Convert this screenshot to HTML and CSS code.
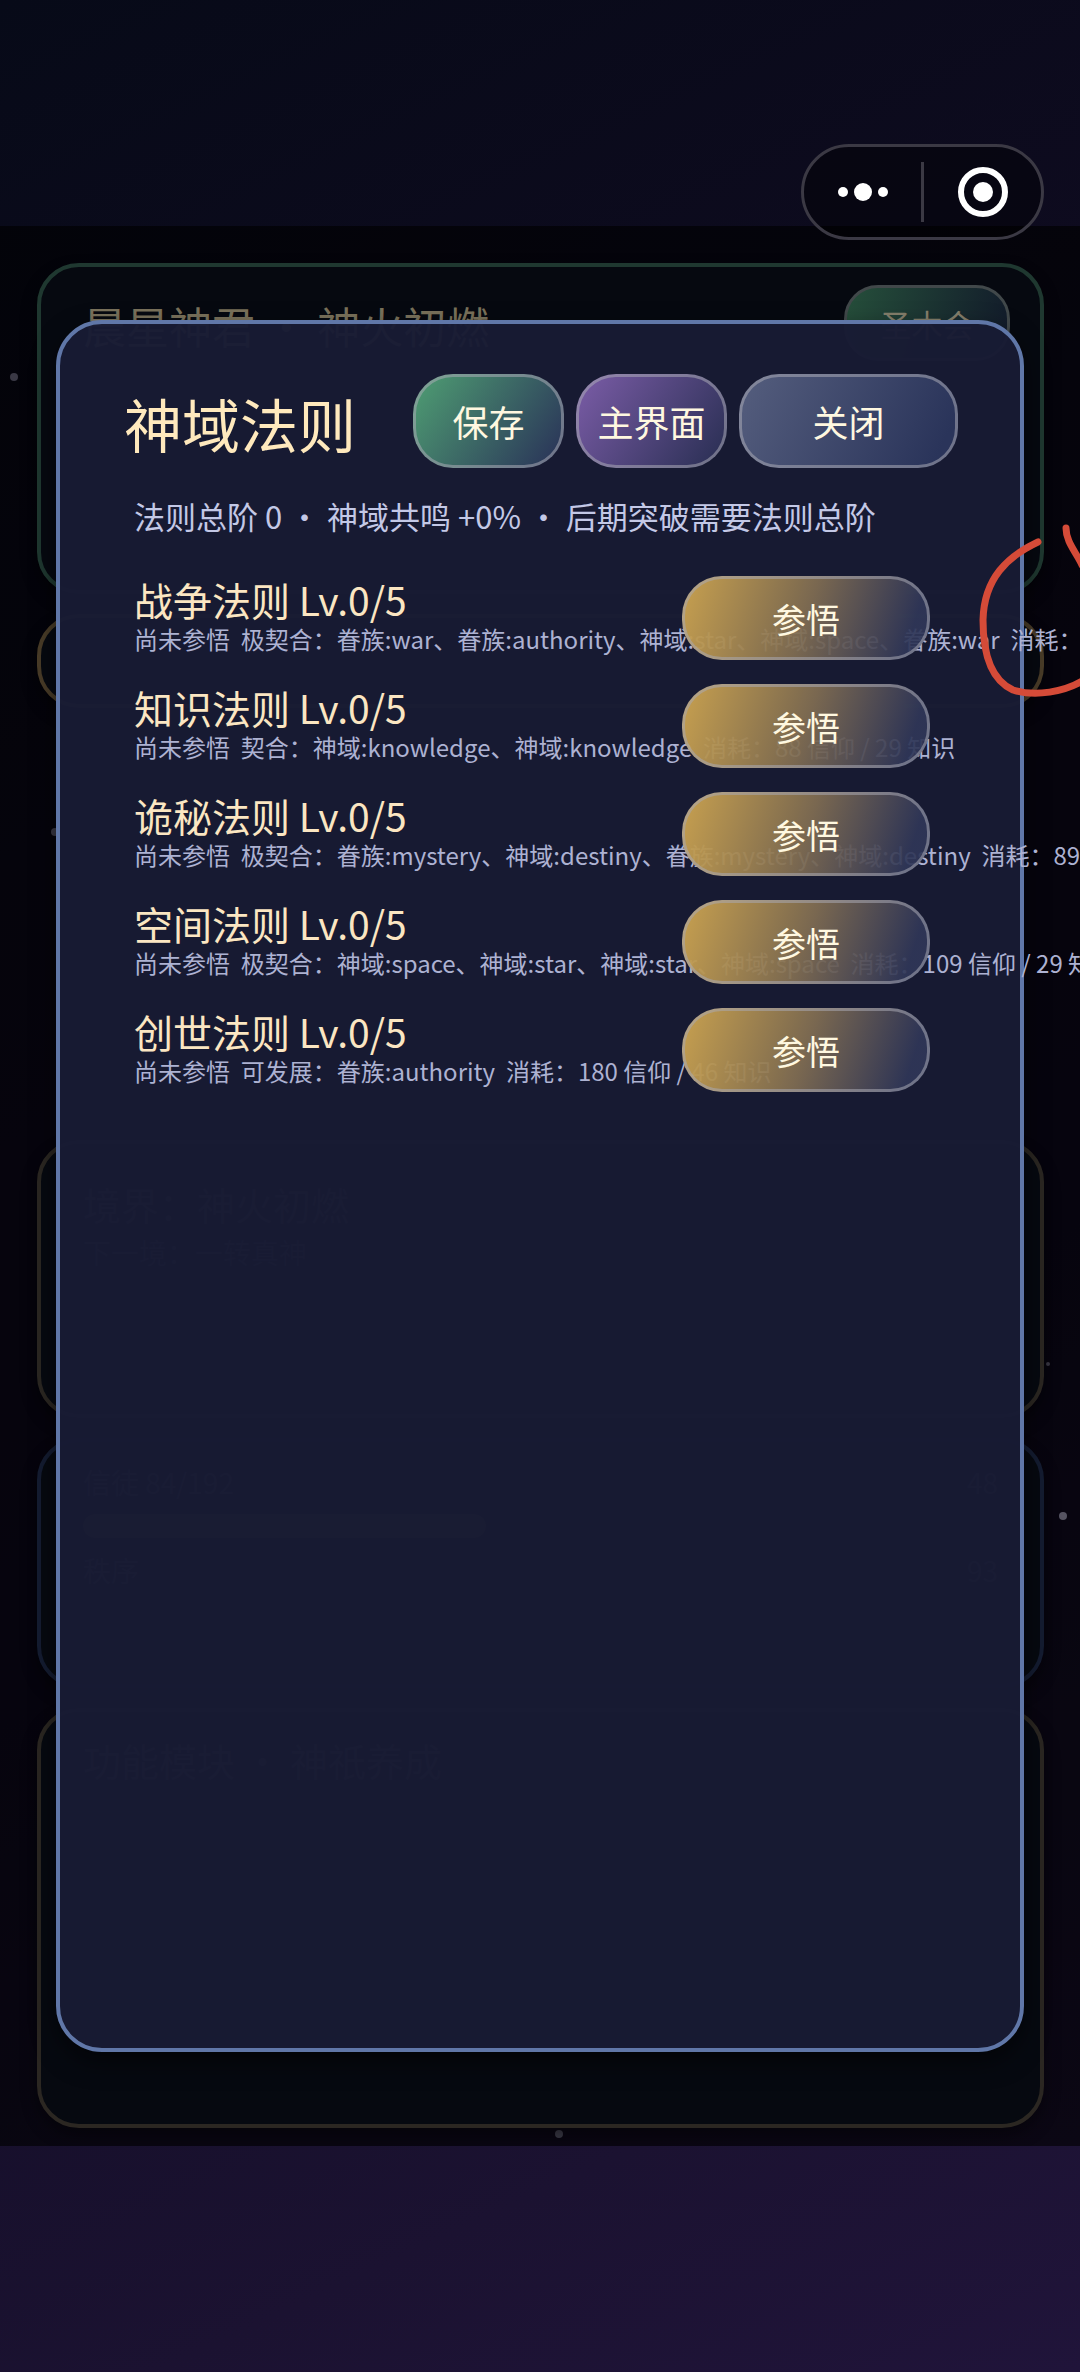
FILE: index.html
```html
<!DOCTYPE html>
<html lang="zh-CN">
<head>
<meta charset="utf-8">
<meta name="viewport" content="width=device-width, initial-scale=1">
<title>神域法则</title>
<link rel="stylesheet" href="styles.css">
</head>
<body>
<nav class="capsule" aria-label="小程序菜单">
  <button class="capsule-btn" type="button" aria-label="更多">
    <svg width="52" height="20" viewBox="0 0 52 20"><circle cx="6" cy="10" r="5"/><circle cx="26" cy="10" r="9"/><circle cx="46" cy="10" r="5"/></svg>
  </button>
  <span class="capsule-line"></span>
  <button class="capsule-btn" type="button" aria-label="退出">
    <svg width="52" height="52" viewBox="0 0 52 52"><circle cx="26" cy="26" r="22" fill="none" stroke="#fff" stroke-width="6"/><circle cx="26" cy="26" r="10"/></svg>
  </button>
</nav>

<main class="scene">
  <svg class="stars" viewBox="0 0 1080 1920" aria-hidden="true">
    <g fill="#3a3945"><circle cx="14" cy="151" r="4"/><circle cx="55" cy="606" r="4"/><circle cx="559" cy="1908" r="4"/><circle cx="1048" cy="1138" r="2"/></g>
    <circle cx="1063" cy="1290" r="4" fill="#565462"/>
  </svg>

  <section class="card card-god">
    <h2 class="god-name">晨星神君 · 神火初燃</h2>
    <button class="camp" type="button">圣木会</button>
  </section>
  <section class="card card-notice"></section>
  <section class="world"></section>
  <section class="card card-realm">
    <h2 class="realm-name">境界：神火初燃</h2>
    <p class="ghost">下一境：一转真神</p>
  </section>
  <section class="card card-stats">
    <p class="stat"><span>信徒 84/192</span><span>48</span></p>
    <div class="bar"></div>
    <p class="stat"><span>秩序</span><span>93</span></p>
  </section>
  <section class="card card-modules">
    <h2 class="realm-name">功能模块 · 神祇养成</h2>
  </section>

  <div class="dialog" role="dialog" aria-labelledby="dialog-title">
    <header class="dialog-head">
      <h1 class="dialog-title" id="dialog-title">神域法则</h1>
      <button class="btn btn-save" type="button">保存</button>
      <button class="btn btn-home" type="button">主界面</button>
      <button class="btn btn-close" type="button">关闭</button>
    </header>
    <div class="dialog-body">
      <p class="summary">法则总阶 0 · 神域共鸣 +0% · 后期突破需要法则总阶</p>
      <ul class="laws">
        <li class="law">
          <div class="law-text"><h3 class="law-name">战争法则 Lv.0/5</h3><p class="law-info">尚未参悟  极契合：眷族:war、眷族:authority、神域:star、神域:space、眷族:war  消耗：</p></div>
          <button class="btn btn-learn" type="button">参悟</button>
        </li>
        <li class="law">
          <div class="law-text"><h3 class="law-name">知识法则 Lv.0/5</h3><p class="law-info">尚未参悟  契合：神域:knowledge、神域:knowledge  消耗：88 信仰 / 29 知识</p></div>
          <button class="btn btn-learn" type="button">参悟</button>
        </li>
        <li class="law">
          <div class="law-text"><h3 class="law-name">诡秘法则 Lv.0/5</h3><p class="law-info">尚未参悟  极契合：眷族:mystery、神域:destiny、眷族:mystery、神域:destiny  消耗：89</p></div>
          <button class="btn btn-learn" type="button">参悟</button>
        </li>
        <li class="law">
          <div class="law-text"><h3 class="law-name">空间法则 Lv.0/5</h3><p class="law-info">尚未参悟  极契合：神域:space、神域:star、神域:star、神域:space  消耗：109 信仰 / 29 知识</p></div>
          <button class="btn btn-learn" type="button">参悟</button>
        </li>
        <li class="law">
          <div class="law-text"><h3 class="law-name">创世法则 Lv.0/5</h3><p class="law-info">尚未参悟  可发展：眷族:authority  消耗：180 信仰 / 46 知识</p></div>
          <button class="btn btn-learn" type="button">参悟</button>
        </li>
      </ul>
    </div>
  </div>

  <svg class="mark" width="110" height="190" viewBox="970 514 110 190" aria-hidden="true">
    <path d="M1038 542C1008 556 984 578 983 620C983 655 991 680 1013 690C1035 697 1065 692 1084 680M1066 528C1066 542 1076 552 1082 565"/>
  </svg>
</main>
</body>
</html>
```
FILE: styles.css
```css
* { box-sizing: border-box; }

body {
  margin: 0;
  min-height: 100vh;
  display: flex;
  flex-direction: column;
  justify-content: center;
  overflow-x: hidden;
  background: linear-gradient(155deg, #070a18 0%, #0f0b20 30%, #120d26 60%, #1b1231 85%, #20143a 100%);
  color: #fff;
  font-family: "Noto Sans CJK SC", sans-serif;
}

h1, h2, h3, p, ul { margin: 0; padding: 0; font-weight: 400; }
ul { list-style: none; }
button { margin: 0; padding: 0; font: inherit; color: inherit; }

.capsule {
  position: absolute;
  top: 144px;
  right: 36px;
  z-index: 3;
  display: flex;
  align-items: center;
  width: 243px;
  height: 96px;
  border: 3px solid #3b3944;
  border-radius: 48px;
  background: rgba(0, 0, 0, .4);
}
.capsule-btn {
  flex: 1;
  display: flex;
  align-items: center;
  justify-content: center;
  height: 100%;
  border: 0;
  background: none;
}
.capsule-btn svg { fill: #fff; }
.capsule-line { width: 3px; height: 60px; background: #3b3944; }

.scene {
  position: relative;
  display: flex;
  flex-direction: column;
  gap: 20px;
  min-height: 1920px;
  padding: 37px 36px 18px 37px;
  background: rgba(0, 0, 0, .62);
  overflow: hidden;
}
.stars { position: absolute; inset: 0; width: 100%; height: 100%; }

.card {
  position: relative;
  padding: 32px 42px;
  border: 4px solid #2b2722;
  border-radius: 42px;
  background: #060910;
  box-shadow: 0 8px 16px rgba(0, 0, 0, .4);
}
.card-god {
  display: flex;
  align-items: flex-start;
  justify-content: space-between;
  min-height: 331px;
  padding: 18px 30px 18px 42px;
  border-color: #1f3830;
}
.god-name { padding-top: 10px; font-size: 43px; line-height: 60px; color: #7a725b; }
.camp {
  width: 166px;
  height: 76px;
  border: 3px solid #41484a;
  border-radius: 34px;
  background: linear-gradient(105deg, #26503b, #121b2a 95%) border-box;
  color: #857f6c;
  font-size: 31px;
}
.card-notice { min-height: 94px; border-color: #493c28; }
.world { flex: 1; }
.card-realm { min-height: 278px; }
.realm-name { font-size: 38px; line-height: 56px; color: #4a4540; }
.ghost { font-size: 28px; line-height: 40px; color: #3c3d48; }
.card-stats { min-height: 250px; border-color: #141c31; padding-top: 20px; }
.stat { display: flex; justify-content: space-between; font-size: 28px; line-height: 40px; color: #484850; }
.bar { width: 44%; height: 24px; margin: 12px 0; border-radius: 12px; background: #4d3f20; }
.card-modules { min-height: 420px; padding-top: 20px; }

.dialog {
  position: absolute;
  inset: 94px 56px;
  display: flex;
  flex-direction: column;
  gap: 24px;
  padding: 50px 0 0;
  border: 4px solid #6077a8;
  border-radius: 46px;
  background: rgba(24, 27, 52, .97);
  box-shadow: 0 10px 24px rgba(0, 0, 0, .5);
}
.dialog-head {
  display: flex;
  align-items: center;
  gap: 12px;
  padding: 0 62px 0 64px;
}
.dialog-title { flex: 1; padding-top: 4px; font-size: 58px; line-height: 84px; color: #ffe9bd; white-space: nowrap; }

.btn {
  flex: none;
  border: 3px solid rgba(170, 170, 180, .55);
  border-radius: 40px;
  color: #fff8e0;
  text-align: center;
  white-space: nowrap;
}
.dialog-head .btn { height: 94px; font-size: 36px; }
.btn-save { width: 151px; background: linear-gradient(125deg, #4f9f73, #2c3a5a 90%) border-box; }
.btn-home { width: 151px; background: linear-gradient(125deg, #7c5da8, #2f3259 90%) border-box; }
.btn-close { width: 219px; background: linear-gradient(115deg, #555e7e, #2a345a 90%) border-box; }

.dialog-body { padding: 0 90px 0 74px; }
.summary { font-size: 31px; line-height: 48px; color: #c3c8e6; white-space: nowrap; }
.laws { display: flex; flex-direction: column; gap: 24px; margin-top: 36px; }
.law { display: flex; align-items: center; height: 84px; }
.law-text { flex: 1; min-width: 0; padding-bottom: 6px; white-space: pre; }
.law-name { font-size: 39px; line-height: 48px; color: #fbe6c2; }
.law-info { font-size: 24px; line-height: 32px; color: #adb2d2; }
.btn-learn {
  position: relative;
  width: 248px;
  height: 84px;
  background: linear-gradient(108deg, rgba(207, 166, 80, .96), rgba(128, 109, 82, .94) 50%, rgba(48, 55, 88, .93) 90%) border-box;
  font-size: 34px;
}

.mark { position: absolute; top: 288px; right: 0; fill: none; stroke: #d54b38; stroke-width: 7; stroke-linecap: round; }
```
